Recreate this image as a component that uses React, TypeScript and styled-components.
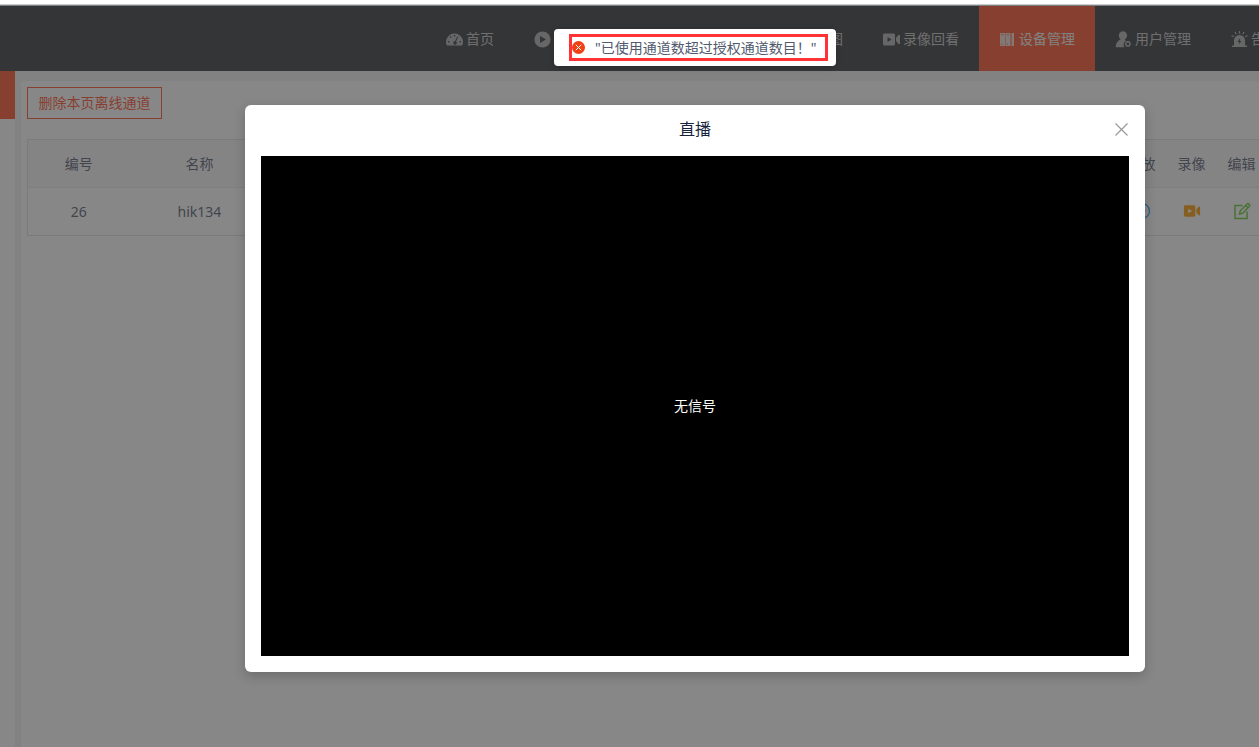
import React from "react";
import styled, { createGlobalStyle } from "styled-components";

const GlobalStyle = createGlobalStyle`
  * { box-sizing: border-box; }
  html, body, #root { height: 100%; }
  body {
    margin: 0;
    overflow: hidden;
    background: #fff;
    font-family: "Noto Sans", "Noto Sans CJK SC", sans-serif;
    font-size: 14px;
    line-height: 20px;
    color: #515a6e;
  }
  button { font: inherit; color: inherit; cursor: pointer; padding: 0; border: 0; background: none; }
  a { color: inherit; text-decoration: none; }
`;

const Window = styled.div`
  display: flex;
  flex-direction: column;
  height: 100%;
  overflow: hidden;
`;

const TopStrip = styled.div`
  flex: none;
  height: 6px;
  background: #ccc;
  border-top: 4px solid #fff;
  border-bottom: 1px solid #7d8080;
`;

const Stage = styled.div`
  position: relative;
  flex: 1;
  display: flex;
  flex-direction: column;
  width: calc(100% + 131px);
  background: #f2f2f2;
`;

const Header = styled.header`
  flex: none;
  height: 65px;
  padding-left: 426px;
  background: #303236;
  overflow: hidden;
`;

const Nav = styled.nav`
  display: flex;
  height: 100%;
`;

const NavItem = styled.a<{ $active?: boolean; $span?: number; $end?: boolean }>`
  flex: none;
  display: flex;
  align-items: center;
  justify-content: ${(p) => (p.$end ? "flex-end" : "flex-start")};
  gap: 3px;
  width: ${(p) => p.$span ?? 116}px;
  padding: 1px 20px 0;
  background: ${(p) => (p.$active ? "#ff4d27" : "transparent")};
  color: ${(p) => (p.$active ? "#f2f2f2" : "#c4c4c4")};
  white-space: nowrap;
`;

const NavIcon = styled.svg`
  flex: none;
  width: 17px;
  height: 17px;
  fill: currentColor;
  opacity: 0.85;
`;

const Body = styled.div`
  flex: 1;
  display: flex;
  min-height: 0;
`;

const Sidebar = styled.aside`
  flex: none;
  width: 15px;
  background: #fff;
`;

const SidebarActive = styled.div`
  height: 48px;
  background: #ff4d27;
`;

const Content = styled.main`
  flex: 1;
  margin: 10px 0 0 6px;
  padding: 6px 27px 0 6px;
  background: #fff;
`;

const OutlineButton = styled.button`
  display: block;
  width: 135px;
  height: 32px;
  border: 1px solid #ff4d27;
  color: #ff4d27;
`;

const Table = styled.table`
  width: 100%;
  margin-top: 20px;
  table-layout: fixed;
  border-collapse: collapse;
  border: 1px solid #dcdee2;
  text-align: center;
`;

const Row = styled.tr<{ $head?: boolean }>`
  height: 48px;
  background: ${(p) => (p.$head ? "#f8f8f9" : "#fff")};
  border-bottom: 1px solid ${(p) => (p.$head ? "#e8eaec" : "#dcdee2")};
`;

const Heading = styled.th`
  padding: 0;
  font-weight: inherit;
`;

const Cell = styled.td`
  padding: 0;
`;

const RowAction = styled.button<{ $color: string }>`
  display: block;
  margin: 0 auto;
  padding-bottom: 2px;
  color: ${(p) => p.$color};
  svg { display: block; width: 18px; height: 18px; }
`;

const Mask = styled.div`
  position: absolute;
  inset: 0;
  display: flex;
  align-items: flex-start;
  justify-content: center;
  padding-top: 99px;
  background: rgba(55, 55, 55, 0.6);
`;

const Dialog = styled.section`
  width: 900px;
  padding: 0 16px 16px;
  border-radius: 6px;
  background: #fff;
  box-shadow: 0 4px 12px rgba(0, 0, 0, 0.2);
`;

const DialogHeader = styled.header`
  display: grid;
  grid-template-columns: 1fr auto 1fr;
  align-items: center;
  height: 51px;
  padding-bottom: 3px;
`;

const DialogTitle = styled.h2`
  grid-column: 2;
  margin: 0;
  font-size: 16px;
  line-height: 20px;
  font-weight: 400;
  color: #17233d;
`;

const CloseButton = styled.button`
  justify-self: end;
  color: #999;
  svg { display: block; width: 15px; height: 15px; }
`;

const Player = styled.div`
  display: flex;
  align-items: center;
  justify-content: center;
  height: 500px;
  background: #000;
  color: #fff;
`;

const ToastLayer = styled.div`
  position: absolute;
  top: 23px;
  left: 0;
  right: 0;
  display: flex;
  justify-content: center;
`;

const Toast = styled.div`
  width: 282px;
  height: 37px;
  padding: 5px 8px 5px 15px;
  border-radius: 4px;
  background: #fff;
  box-shadow: 0 1px 6px rgba(0, 0, 0, 0.2);
`;

const ToastFrame = styled.div`
  display: flex;
  align-items: center;
  gap: 10px;
  height: 27px;
  border: 3px solid #ff3236;
  white-space: nowrap;
  svg { flex: none; display: block; width: 13px; height: 13px; }
`;

const GaugeIcon = () => (
  <NavIcon viewBox="0 0 17 17" aria-hidden="true">
    <path
      fillRule="evenodd"
      d="M8.500 2.500A8.500 8.500 0 0 0 0 11c0 1.500.4 2.600 1 3.500h15c.6-.9 1-2 1-3.500A8.500 8.500 0 0 0 8.500 2.500zM7.800 4h1.400v1.400H7.800zM3.600 6l1-1 1 1-1 1zM2 10h1.400v1.400H2zM13.600 10H15v1.400h-1.400zM11.300 5.500l.9.500-2.200 4.500a1.700 1.700 0 1 1-1-.3z"
    />
  </NavIcon>
);

const PlayIcon = () => (
  <NavIcon viewBox="0 0 17 17" aria-hidden="true">
    <path fillRule="evenodd" d="M8.500.4a8.100 8.100 0 1 0 0 16.200 8.100 8.100 0 0 0 0-16.200zM6 5v7l6-3.500z" />
  </NavIcon>
);

const cameraPath =
  "M1.500 2.500h9A1.500 1.500 0 0 1 12 4v9a1.500 1.500 0 0 1-1.500 1.500h-9A1.500 1.500 0 0 1 0 13V4a1.500 1.500 0 0 1 1.500-1.500zM4.500 6v5l4-2.500zM13 7l2.500-3H17v9h-1.500L13 10z";

const CameraIcon = () => (
  <NavIcon viewBox="0 0 17 17" aria-hidden="true">
    <path fillRule="evenodd" d={cameraPath} />
  </NavIcon>
);

const DeviceIcon = () => (
  <NavIcon viewBox="0 0 17 17" aria-hidden="true">
    <path
      fillRule="evenodd"
      d="M1 2h5v13H1zM6.500 2h5v13h-5zM12.500 2H15v13h-2.500zM2.400 3.200v1h2v-1zM7.900 3.200v1h2v-1zM2.400 12.800v1h1v-1zM7.900 12.800v1h1v-1z"
    />
  </NavIcon>
);

const UserIcon = () => (
  <NavIcon viewBox="0 0 17 17" aria-hidden="true">
    <path d="M8 .3C5.600.3 3.800 2 3.800 4.400c0 1.700.8 3.100 2 3.900C2.700 9.600.8 12.300.6 16.300h8.900a4.200 4.200 0 0 1 1.200-6.200c-.2-.8-.6-1.500-.9-1.900 1.400-.8 2.300-2.100 2.300-3.800C12.100 2 10.400.3 8 .3z" />
    <path
      fillRule="evenodd"
      d="M11.300 10.100h3.200l1.700 2.800-1.700 2.900h-3.200l-1.700-2.900zM12.900 11.500a1.400 1.400 0 1 0 0 2.800 1.400 1.400 0 0 0 0-2.800z"
    />
  </NavIcon>
);

const AlarmIcon = () => (
  <NavIcon viewBox="0 0 17 17" aria-hidden="true">
    <path fillRule="evenodd" d="M3 14.500V9.500a5.500 5.500 0 0 1 11 0v5h2V16H1v-1.500zM9.200 7 6.500 11h1.800l-.6 2.500L10.500 10H8.800z" />
    <path
      d="M8.500 0v2.700M4 1l1.200 2.200M13 1l-1.200 2.200M.6 4.500l2.200 1.200M16.400 4.500l-2.200 1.200"
      fill="none"
      stroke="currentColor"
      strokeWidth="1.300"
    />
  </NavIcon>
);

export default function App() {
  return (
    <Window>
      <GlobalStyle />
      <TopStrip />
      <Stage>
        <Header>
          <Nav>
            <NavItem href="#home" $span={88}>
              <GaugeIcon />首页
            </NavItem>
            <NavItem href="#live" $span={232} aria-label="播放">
              <PlayIcon />
            </NavItem>
            <NavItem href="#map" $span={117} $end>
              图
            </NavItem>
            <NavItem href="#record">
              <CameraIcon />录像回看
            </NavItem>
            <NavItem href="#device" $active>
              <DeviceIcon />设备管理
            </NavItem>
            <NavItem href="#user">
              <UserIcon />用户管理
            </NavItem>
            <NavItem href="#alarm">
              <AlarmIcon />告警
            </NavItem>
          </Nav>
        </Header>
        <Body>
          <Sidebar>
            <SidebarActive />
          </Sidebar>
          <Content>
            <OutlineButton type="button">删除本页离线通道</OutlineButton>
            <Table>
              <colgroup>
                <col style={{ width: 102 }} />
                <col style={{ width: 140 }} />
                <col />
                <col style={{ width: 50 }} />
                <col style={{ width: 50 }} />
                <col style={{ width: 50 }} />
                <col style={{ width: 96 }} />
              </colgroup>
              <thead>
                <Row $head>
                  <Heading scope="col">编号</Heading>
                  <Heading scope="col">名称</Heading>
                  <Cell />
                  <Heading scope="col">播放</Heading>
                  <Heading scope="col">录像</Heading>
                  <Heading scope="col">编辑</Heading>
                  <Cell />
                </Row>
              </thead>
              <tbody>
                <Row>
                  <Cell>26</Cell>
                  <Cell>hik134</Cell>
                  <Cell />
                  <Cell>
                    <RowAction type="button" aria-label="播放" $color="#2d9cf0">
                      <svg viewBox="0 0 18 18" fill="none" stroke="currentColor" strokeWidth="1.300">
                        <circle cx="9" cy="9" r="7.500" />
                        <path d="M7 5.500v7l5-3.500z" />
                      </svg>
                    </RowAction>
                  </Cell>
                  <Cell>
                    <RowAction type="button" aria-label="录像" $color="#ff9900">
                      <svg viewBox="-1 -1 19 19" fill="currentColor">
                        <path fillRule="evenodd" d={cameraPath} />
                      </svg>
                    </RowAction>
                  </Cell>
                  <Cell>
                    <RowAction type="button" aria-label="编辑" $color="#62c92e">
                      <svg viewBox="0 0 18 18" fill="none" stroke="currentColor" strokeWidth="1.500">
                        <path d="M9.500 3.500h-7.500v13h12v-7" />
                        <path d="M6.500 12l.8-3.200 6.700-6.900a1.200 1.200 0 0 1 1.700 0l.7.700a1.200 1.200 0 0 1 0 1.700l-6.700 6.900zM12.700 3.500l2.300 2.300" />
                      </svg>
                    </RowAction>
                  </Cell>
                  <Cell />
                </Row>
              </tbody>
            </Table>
          </Content>
        </Body>
        <Mask>
          <Dialog role="dialog" aria-labelledby="dialog-title">
            <DialogHeader>
              <DialogTitle id="dialog-title">直播</DialogTitle>
              <CloseButton type="button" aria-label="关闭">
                <svg viewBox="0 0 15 15" fill="none" stroke="currentColor" strokeWidth="1.200">
                  <path d="M1.500 1.500l12 12M13.500 1.500l-12 12" />
                </svg>
              </CloseButton>
            </DialogHeader>
            <Player>无信号</Player>
          </Dialog>
        </Mask>
        <ToastLayer>
          <Toast role="alert">
            <ToastFrame>
              <svg viewBox="0 0 13 13" aria-hidden="true">
                <circle cx="6.500" cy="6.500" r="6.500" fill="#f04014" />
                <path d="M3.800 3.800l5.400 5.400M9.200 3.800l-5.400 5.400" stroke="#fff" strokeWidth="1" />
              </svg>
              <span>"已使用通道数超过授权通道数目！"</span>
            </ToastFrame>
          </Toast>
        </ToastLayer>
      </Stage>
    </Window>
  );
}
